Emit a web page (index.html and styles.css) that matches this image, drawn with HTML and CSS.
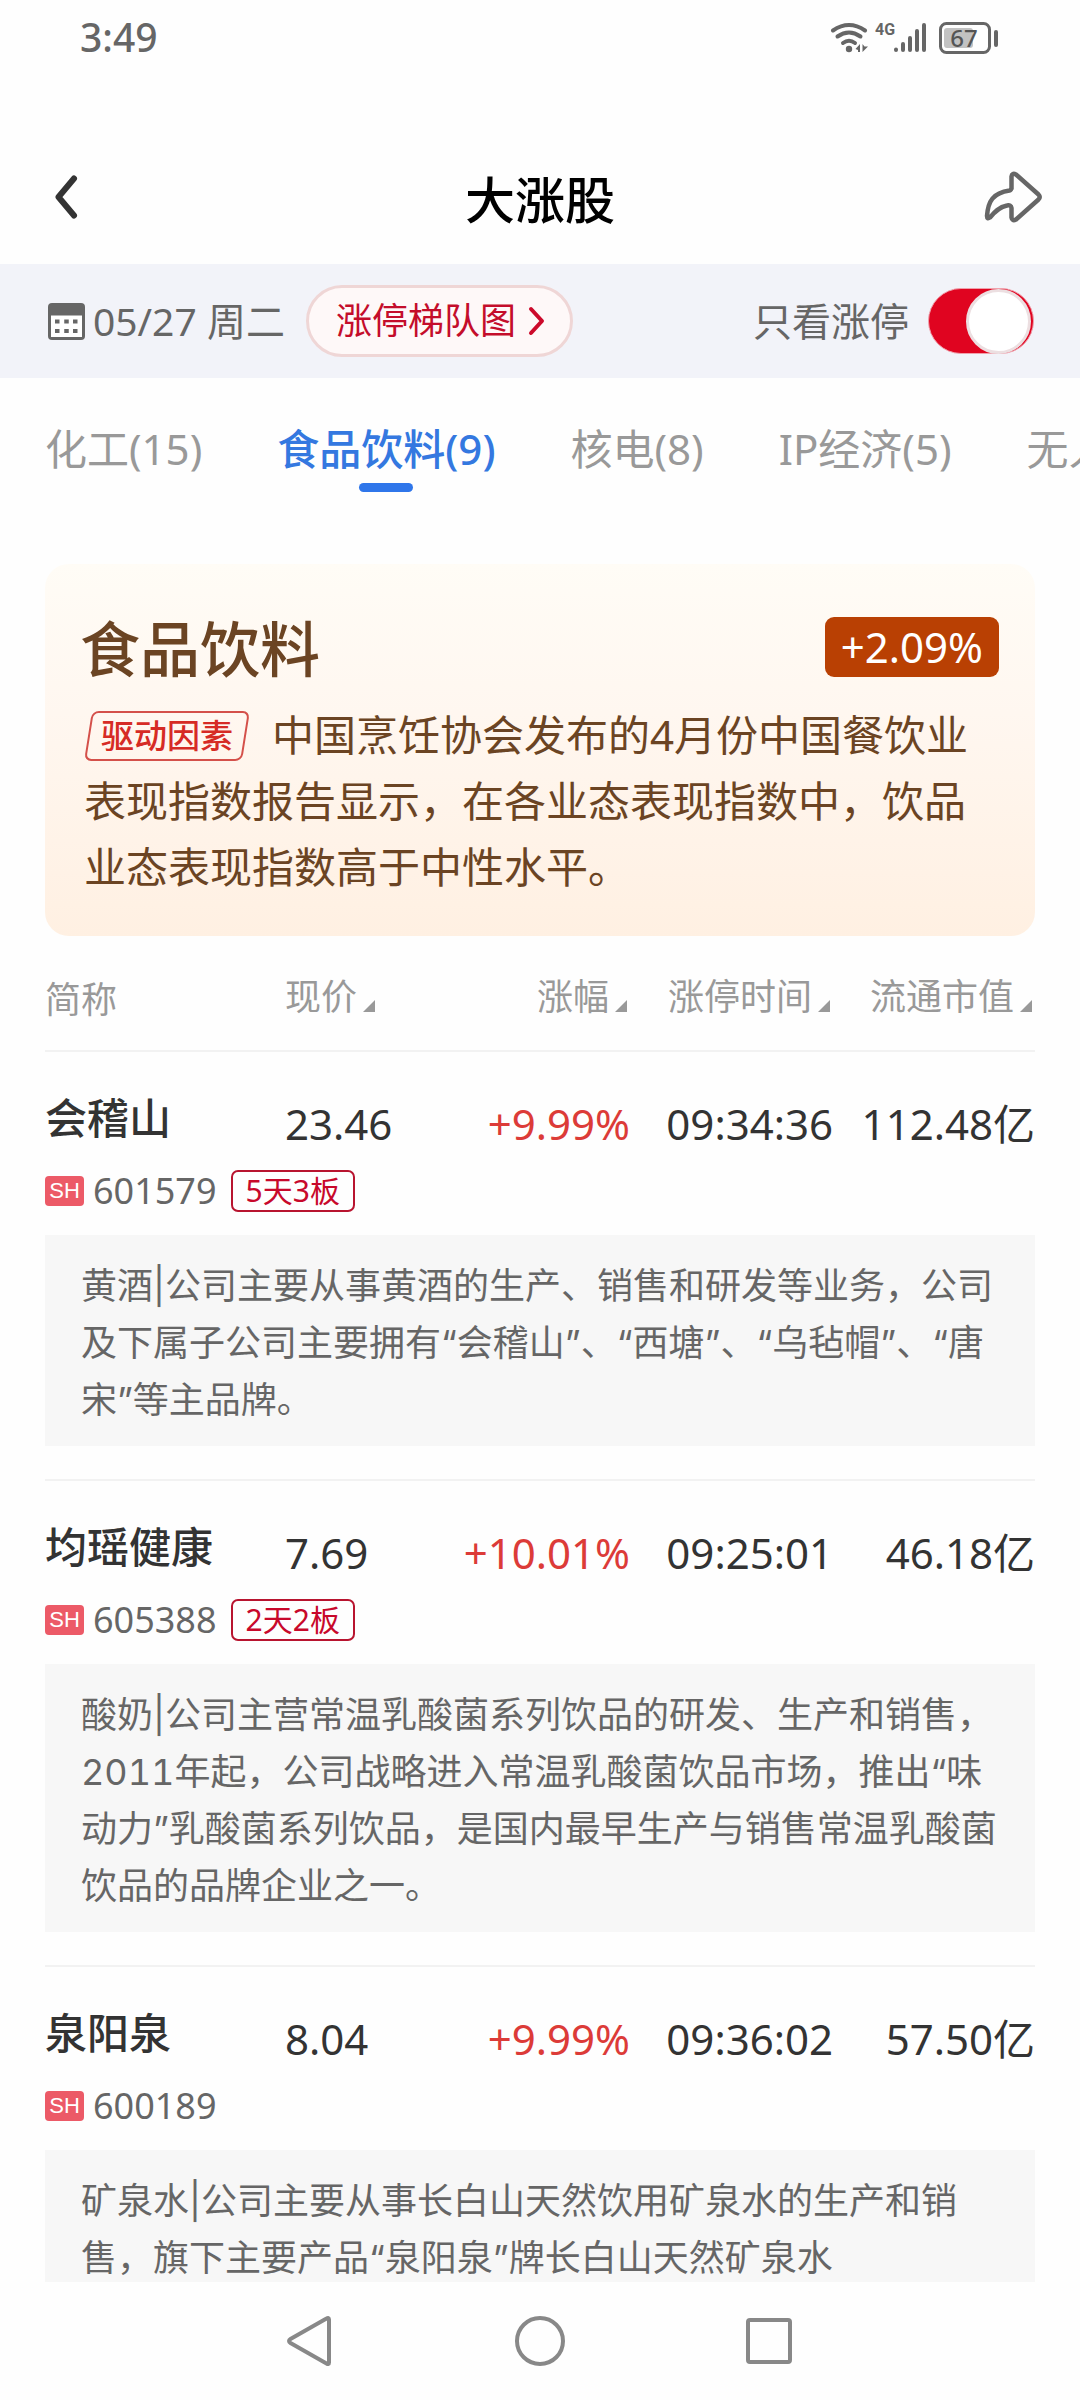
FILE: index.html
```html
<!DOCTYPE html>
<html lang="zh-CN">
<head>
<meta charset="utf-8">
<meta name="viewport" content="width=device-width, initial-scale=1">
<title>大涨股</title>
<link rel="stylesheet" href="styles.css">
</head>
<body>
<div class="app">
  <div class="status">
    <span class="status-time">3:49</span>
    <div class="status-icons">
      <svg class="status-signal" viewBox="0 0 170 36" aria-hidden="true">
        <g fill="none" stroke="#666" stroke-width="4" stroke-linecap="round">
          <path d="M4 11.500Q20 .500 36 11.500"/>
          <path d="M8.500 17.500Q20 9.500 31.500 17.500"/>
          <path d="M14 24Q20 19.500 26 24"/>
          <path d="M67 30.500V31M74 25V31M81 19V31M88 12V31M95 6V31"/>
        </g>
        <circle cx="20" cy="30" r="3.200" fill="#666"/>
        <path d="M31 25V33H29V31L26.500 30ZM33.500 25V33L39 27.500H35.500Z" fill="#666"/>
        <rect x="111.500" y="4.500" width="49" height="29" rx="6" fill="none" stroke="#666" stroke-width="3"/>
        <rect x="115" y="9" width="29" height="20" rx="3" fill="#c2c2c2"/>
        <rect x="165" y="11" width="4" height="17" rx="2" fill="#666"/>
        <text class="net" x="46" y="16">4G</text>
        <text class="charge" x="135" y="28" text-anchor="middle">67</text>
      </svg>
    </div>
  </div>

  <header class="titlebar">
    <button class="icon-btn" type="button" aria-label="返回">
      <svg width="24" height="46" viewBox="0 0 24 46" aria-hidden="true"><path d="M20 4.500L4.500 23L20 41.500" fill="none" stroke="#333" stroke-width="6" stroke-linecap="round" stroke-linejoin="round"/></svg>
    </button>
    <h1 class="title">大涨股</h1>
    <button class="icon-btn share" type="button" aria-label="分享">
      <svg width="60" height="54" viewBox="0 0 60 54" aria-hidden="true"><path d="M27.500 19.500V6.500Q28 2.500 32 4.500L54.500 24.500Q57 27 54.500 29.500L32 49.500Q28 51.500 27.500 47.500V38Q27 34.500 23 35.500C15 37 10.500 42 6 47.500Q3 49.500 3 46C4 31 9 23 25.500 20.500Q27.500 20 27.500 17" fill="none" stroke="#666" stroke-width="4.500" stroke-linejoin="round"/></svg>
    </button>
  </header>

  <div class="filter">
    <button class="date" type="button">
      <svg width="37" height="37" viewBox="0 0 37 37" aria-hidden="true">
        <rect width="37" height="37" rx="4" fill="#666"/>
        <path d="M3 12.500H34V34H3Z" fill="#fff"/>
        <path d="M7 16.500h4.500v4h-4.500zM16.250 16.500h4.500v4h-4.500zM25 16.500h4.500v4h-4.500zM7 26h4.500v4h-4.500zM16.250 26h4.500v4h-4.500zM25 26h4.500v4h-4.500z" fill="#666"/>
      </svg>
      <span>05/27 周二</span>
    </button>
    <button class="ladder" type="button">
      <span>涨停梯队图</span>
      <svg width="18" height="30" viewBox="0 0 18 30" aria-hidden="true"><path d="M3 3L14 15L3 27" fill="none" stroke="#cc0a2b" stroke-width="4" stroke-linecap="round" stroke-linejoin="round"/></svg>
    </button>
    <label class="only">
      <span>只看涨停</span>
      <input class="switch" type="checkbox" checked>
    </label>
  </div>

  <nav class="tabs">
    <a class="tab" href="#">化工(15)</a>
    <a class="tab tab-on" href="#" aria-current="true">食品饮料(9)</a>
    <a class="tab" href="#">核电(8)</a>
    <a class="tab" href="#">IP经济(5)</a>
    <a class="tab" href="#">无人机</a>
  </nav>

  <main class="content">
    <section class="theme">
      <div class="theme-head">
        <h2 class="theme-name">食品饮料</h2>
        <span class="theme-rate">+2.09%</span>
      </div>
      <p class="theme-text"><span class="driver">驱动因素</span>中国烹饪协会发布的4月份中国餐饮业表现指数报告显示，在各业态表现指数中，饮品业态表现指数高于中性水平。</p>
    </section>

    <table class="stocks">
      <colgroup>
        <col><col class="c-price"><col class="c-rate"><col class="c-time"><col class="c-cap">
      </colgroup>
      <thead>
        <tr>
          <th scope="col" class="th-name">简称</th>
          <th scope="col" class="left"><button class="sort" type="button">现价<i class="tri"></i></button></th>
          <th scope="col"><button class="sort" type="button">涨幅<i class="tri"></i></button></th>
          <th scope="col"><button class="sort" type="button">涨停时间<i class="tri"></i></button></th>
          <th scope="col"><button class="sort" type="button">流通市值<i class="tri"></i></button></th>
        </tr>
      </thead>
      <tbody>
        <tr class="quote">
          <th scope="row">会稽山</th>
          <td class="left">23.46</td><td class="up">+9.99%</td><td>09:34:36</td><td>112.48亿</td>
        </tr>
        <tr><td colspan="5" class="meta"><div class="ids"><span class="market">SH</span><span class="code">601579</span><span class="streak">5天3板</span></div></td></tr>
        <tr><td colspan="5" class="about"><p class="note">黄酒|公司主要从事黄酒的生产、销售和研发等业务，公司及下属子公司主要拥有“会稽山”、“西塘”、“乌毡帽”、“唐宋”等主品牌。</p></td></tr>
      </tbody>
      <tbody>
        <tr class="quote">
          <th scope="row">均瑶健康</th>
          <td class="left">7.69</td><td class="up">+10.01%</td><td>09:25:01</td><td>46.18亿</td>
        </tr>
        <tr><td colspan="5" class="meta"><div class="ids"><span class="market">SH</span><span class="code">605388</span><span class="streak">2天2板</span></div></td></tr>
        <tr><td colspan="5" class="about"><p class="note">酸奶|公司主营常温乳酸菌系列饮品的研发、生产和销售，2011年起，公司战略进入常温乳酸菌饮品市场，推出“味动力”乳酸菌系列饮品，是国内最早生产与销售常温乳酸菌饮品的品牌企业之一。</p></td></tr>
      </tbody>
      <tbody>
        <tr class="quote">
          <th scope="row">泉阳泉</th>
          <td class="left">8.04</td><td class="up">+9.99%</td><td>09:36:02</td><td>57.50亿</td>
        </tr>
        <tr><td colspan="5" class="meta"><div class="ids"><span class="market">SH</span><span class="code">600189</span></div></td></tr>
        <tr><td colspan="5" class="about"><p class="note">矿泉水|公司主要从事长白山天然饮用矿泉水的生产和销售，旗下主要产品“泉阳泉”牌长白山天然矿泉水</p></td></tr>
      </tbody>
    </table>
  </main>

  <div class="sysnav">
    <button class="icon-btn" type="button" aria-label="后退">
      <svg width="54" height="54" viewBox="0 0 54 54" aria-hidden="true"><path d="M45 5.500V48.500Q45 51 42.500 49.500L6.500 29Q3.500 27 6.500 25L42.500 4.500Q45 3 45 5.500Z" fill="none" stroke="#888" stroke-width="4"/></svg>
    </button>
    <button class="icon-btn" type="button" aria-label="主页">
      <svg width="54" height="54" viewBox="0 0 54 54" aria-hidden="true"><circle cx="27" cy="27" r="23" fill="none" stroke="#888" stroke-width="4"/></svg>
    </button>
    <button class="icon-btn" type="button" aria-label="最近任务">
      <svg width="54" height="54" viewBox="0 0 54 54" aria-hidden="true"><rect x="6" y="6" width="42" height="42" rx="2" fill="none" stroke="#888" stroke-width="4"/></svg>
    </button>
  </div>
</div>
</body>
</html>
```
FILE: styles.css
```css
* {
  box-sizing: border-box;
}

body {
  margin: 0;
  background: #fefefe;
  color: #333;
  font-family: "Noto Sans", "Noto Sans CJK SC", sans-serif;
  font-size: 42px;
}

button {
  margin: 0;
  padding: 0;
  border: 0;
  background: none;
  color: inherit;
  font: inherit;
}

svg {
  display: block;
}

.app {
  display: flex;
  flex-direction: column;
  height: 100vh;
  overflow: hidden;
}

/* system status bar */
.status {
  display: flex;
  flex-shrink: 0;
  align-items: center;
  justify-content: space-between;
  height: 74px;
  padding: 0 81px 0 80px;
  color: #666;
}

.status-time {
  font-size: 39px;
  font-weight: 500;
  line-height: 72px;
}

.status-signal {
  width: 170px;
  height: 36px;
}

.net {
  fill: #666;
  font: bold 16px Roboto, sans-serif;
}

.charge {
  fill: #555;
  font: 500 24px "Noto Sans", sans-serif;
}

/* title bar */
.titlebar {
  display: flex;
  flex-shrink: 0;
  align-items: center;
  justify-content: space-between;
  height: 190px;
  padding: 56px 36px 0 54px;
}

.icon-btn {
  display: flex;
  align-items: center;
}

.titlebar .icon-btn {
  flex: 1;
}

.titlebar .share {
  justify-content: flex-end;
}

.title {
  margin: 0 36px 0 0;
  padding: 6px 0 0 18px;
  color: #000;
  font-size: 50px;
  font-weight: 500;
  line-height: 60px;
}

/* date and filter strip */
.filter {
  display: flex;
  flex-shrink: 0;
  align-items: center;
  height: 114px;
  padding: 0 46px 0 48px;
  background: #f2f3f9;
  color: #666;
  font-size: 39px;
  line-height: 60px;
}

.date {
  display: flex;
  align-items: center;
  gap: 8px;
}

.ladder {
  display: flex;
  align-items: center;
  gap: 12px;
  height: 72px;
  margin-left: 21px;
  padding: 0 24px 0 27px;
  border: 3px solid #efd6d6;
  border-radius: 36px;
  background: #fef8f8;
  color: #c40d2b;
  font-size: 36px;
}

.only {
  display: flex;
  align-items: center;
  gap: 19px;
  margin-left: auto;
}

.switch {
  display: flex;
  align-items: center;
  justify-content: flex-end;
  width: 106px;
  height: 66px;
  margin: 0;
  padding: 0 2px;
  border: 1px solid #f0a0ac;
  border-radius: 33px;
  background: #e00420;
  appearance: none;
}

.switch::before {
  content: "";
  width: 59px;
  height: 59px;
  border: 3px solid #ecdfe1;
  border-radius: 50%;
  background: #fff;
}

.switch:not(:checked) {
  justify-content: flex-start;
  border-color: #ccc;
  background: #ccc;
}

/* theme tabs */
.tabs {
  display: flex;
  flex-shrink: 0;
  gap: 75px;
  padding: 41px 0 0 45px;
  overflow: hidden;
}

.tab {
  flex-shrink: 0;
  color: #999;
  line-height: 60px;
  text-decoration: none;
}

.tab-on {
  color: #3478e0;
  font-weight: 500;
}

.tab-on::after {
  content: "";
  display: block;
  width: 54px;
  height: 9px;
  margin: 4px auto 0;
  border-radius: 5px;
  background: #2f76ea;
}

.content {
  flex: 1;
  min-height: 0;
  padding: 72px 45px 0;
  overflow: hidden;
}

/* theme summary card */
.theme {
  padding: 36px 36px 36px 39px;
  border-radius: 24px;
  background: linear-gradient(#fffcf6, #fff7f0 40%, #fff0e2);
  color: #6b4423;
}

.theme-head {
  display: flex;
  align-items: center;
  justify-content: space-between;
  height: 94px;
  margin: 0 0 8px -4px;
}

.theme-name {
  margin: 0;
  padding-top: 4px;
  font-size: 60px;
  font-weight: 500;
  line-height: 90px;
}

.theme-rate {
  padding: 0 16px;
  border-radius: 9px;
  background: #b94003;
  color: #fff;
  line-height: 60px;
}

.theme-text {
  margin: 0;
  line-height: 66px;
}

.driver {
  position: relative;
  display: inline-block;
  margin-right: 22px;
  padding: 0 17px;
  color: #d62b25;
  font-size: 33px;
  font-weight: 500;
  line-height: 50px;
  vertical-align: 3px;
}

.driver::before {
  content: "";
  position: absolute;
  inset: 0 4px;
  border: 2px solid #d4504a;
  border-radius: 7px;
  transform: skewX(-9deg);
}

/* stock list */
.stocks {
  width: 100%;
  border-spacing: 0;
  table-layout: fixed;
}

.c-price {
  width: 175px;
}

.c-rate {
  width: 170px;
}

.c-time {
  width: 203px;
}

.c-cap {
  width: 202px;
}

.stocks th,
.stocks td {
  padding: 0;
  text-align: right;
  vertical-align: top;
  white-space: nowrap;
}

.stocks thead th {
  height: 114px;
  padding-top: 34px;
  color: #999;
  font-size: 36px;
  font-weight: 400;
  line-height: 54px;
}

.stocks .th-name {
  padding-top: 37px;
  text-align: left;
}

.stocks .left {
  text-align: left;
}

.sort {
  display: inline-flex;
  align-items: flex-end;
  gap: 6px;
  margin-right: 3px;
}

.tri {
  width: 12px;
  height: 12px;
  margin-bottom: 12px;
  background: #999;
  clip-path: polygon(100% 0, 100% 100%, 0 100%);
}

.quote th,
.quote td {
  border-top: 2px solid #f2f2f2;
  line-height: 60px;
}

.stocks .quote th {
  padding: 36px 0 2px;
  font-weight: 500;
  text-align: left;
}

.stocks .quote td {
  padding-top: 42px;
}

.stocks .up {
  color: #dc3b38;
}

.stocks .meta {
  padding: 16px 0 24px;
}

.ids {
  display: flex;
  align-items: center;
  height: 41px;
}

.market {
  width: 39px;
  border-radius: 4px;
  background: #ec5a67;
  color: #fff;
  font-family: "Liberation Sans", sans-serif;
  font-size: 22px;
  line-height: 30px;
  text-align: center;
}

.code {
  margin: 0 14px 0 9px;
  color: #666;
  font-size: 36px;
}

.streak {
  padding: 0 13px;
  border: 2px solid #b8142f;
  border-radius: 7px;
  color: #c8082b;
  font-size: 30px;
  line-height: 38px;
}

.stocks .about {
  padding-bottom: 33px;
  text-align: left;
  white-space: normal;
}

/* Inter first: its curly quotes and bar sit well between hanzi */
.note {
  margin: 0;
  padding: 23px 36px 17px;
  background: #f7f7f7;
  color: #666;
  font-family: Inter, "Noto Sans CJK SC", sans-serif;
  font-size: 36px;
  font-variant-numeric: tabular-nums;
  line-height: 57px;
}

/* system navigation keys */
.sysnav {
  display: flex;
  flex-shrink: 0;
  align-items: center;
  justify-content: center;
  gap: 175px;
  height: 118px;
}
```
